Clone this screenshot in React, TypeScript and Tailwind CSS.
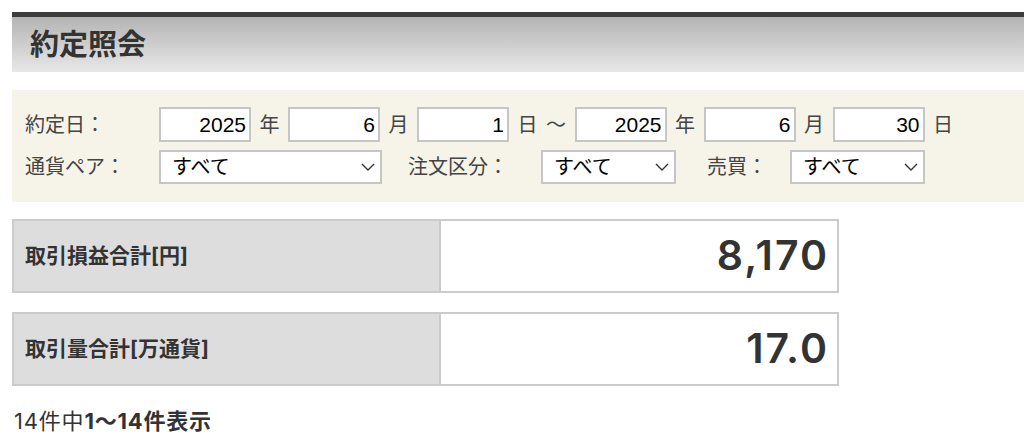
const jp = "font-['Liberation_Sans','Noto_Sans_CJK_JP',sans-serif]";
const sum = "font-['Inter','Noto_Sans_CJK_JP',sans-serif]";

function DateBox({ value }: { value: string }) {
  return (
    <input
      readOnly
      value={value}
      className="h-[35px] w-[92px] border-2 border-[#c6c6c6] bg-white pr-[3px] text-right text-[21px] text-black outline-none"
    />
  );
}

function Unit({ children }: { children: string }) {
  return <span className="text-[20px] leading-none text-[#444]">{children}</span>;
}

function SelectBox({ width, value }: { width: string; value: string }) {
  return (
    <div
      className={`flex h-[34px] items-center justify-between border-2 border-[#c6c6c6] bg-white pl-[11px] pr-[5px] ${width}`}
    >
      <span className="text-[20px] leading-none text-black">{value}</span>
      <svg width="14" height="8" viewBox="0 0 14 8" fill="none">
        <path d="M1 1l6 6 6-6" stroke="#333" strokeWidth="1.4" />
      </svg>
    </div>
  );
}

function SummaryRow({ label, value }: { label: string; value: string }) {
  return (
    <div className="flex h-[74px] w-[827px] border-2 border-[#cbcbcb]">
      <div className="flex w-[427px] items-center border-r-2 border-[#cbcbcb] bg-[#dddddd] pl-[11px]">
        <span className="text-[21px] font-bold text-[#333]">{label}</span>
      </div>
      <div className="flex flex-1 items-center justify-end bg-white pr-[8px]">
        <span className="text-[41px] font-semibold tracking-[2px] text-[#333]">{value}</span>
      </div>
    </div>
  );
}

export default function App() {
  return (
    <div className={`min-h-[448px] w-full bg-white pl-3 pt-3 ${jp}`}>
      <div className="border-t-[5px] border-[#3c3c3c] bg-gradient-to-b from-[#b4b4b4] to-[#e8e8e8]">
        <div className="flex h-[55px] items-center pl-[18px] pt-[2px]">
          <h1 className="text-[29px] font-bold text-[#333]">約定照会</h1>
        </div>
      </div>

      <div className="mt-[18px] flex h-[112px] flex-col gap-[8px] bg-[#f6f4e9] pl-[13px] pt-[17px]">
        <div className="flex items-center">
          <span className="w-[134px] text-[20px] text-[#444]">約定日：</span>
          <div className="flex items-center gap-[8.5px]">
            <DateBox value="2025" />
            <Unit>年</Unit>
            <DateBox value="6" />
            <Unit>月</Unit>
            <DateBox value="1" />
            <Unit>日</Unit>
            <Unit>～</Unit>
            <DateBox value="2025" />
            <Unit>年</Unit>
            <DateBox value="6" />
            <Unit>月</Unit>
            <DateBox value="30" />
            <Unit>日</Unit>
          </div>
        </div>
        <div className="flex items-center">
          <span className="w-[134px] text-[20px] text-[#444]">通貨ペア：</span>
          <SelectBox width="w-[223px]" value="すべて" />
          <span className="ml-[26px] w-[100px] text-[20px] text-[#444]">注文区分：</span>
          <div className="ml-[33px]">
            <SelectBox width="w-[135px]" value="すべて" />
          </div>
          <span className="ml-[31px] w-[60px] text-[20px] text-[#444]">売買：</span>
          <div className="ml-[23px]">
            <SelectBox width="w-[135px]" value="すべて" />
          </div>
        </div>
      </div>

      <div className={`mt-[17px] flex flex-col gap-[19px] ${sum}`}>
        <SummaryRow label="取引損益合計[円]" value="8,170" />
        <SummaryRow label="取引量合計[万通貨]" value="17.0" />
      </div>

      <p className={`mt-[19px] pl-[2px] text-[22px] tracking-[0.8px] text-[#333] ${sum}`}>
        14件中<span className="font-bold">1～14件表示</span>
      </p>
    </div>
  );
}
